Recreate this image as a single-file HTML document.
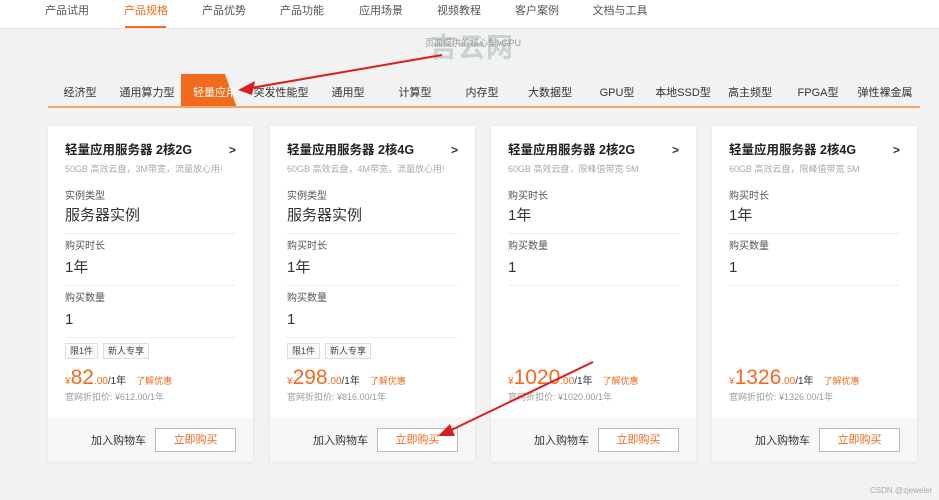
<!DOCTYPE html>
<html><head><meta charset="utf-8"><style>
*{margin:0;padding:0;box-sizing:border-box}
body{width:939px;height:500px;overflow:hidden;background:#f2f2f2;font-family:"Liberation Sans","Noto Sans CJK SC",sans-serif;position:relative;color:#333}
.top{position:absolute;left:0;top:0;width:939px;height:29px;background:#fff;border-bottom:1px solid #e6e6e6}
.nav{position:absolute;top:2px;font-size:11px;color:#555;transform:translateX(-50%);white-space:nowrap}
.tab{position:absolute;top:84px;font-size:11px;color:#333;transform:translateX(-50%);white-space:nowrap}
.card{position:absolute;top:126px;width:205px;height:336px;background:#fff;box-shadow:0 0 3px rgba(0,0,0,.08)}
.card>div{position:absolute;left:17px;white-space:nowrap}
.t{top:16px;font-size:12.5px;font-weight:bold;line-height:16px;color:#222}
.ar{position:absolute;right:17px;top:16px;font-size:12px;font-weight:bold;line-height:16px}
.s{top:37px;font-size:9px;color:#aaa;line-height:12px}
.l{font-size:10px;color:#555;line-height:14px}
.v{font-size:15px;color:#333;line-height:20px}
.d{height:1px;width:171px;background:#eee}
.tg{top:217px;height:16px;font-size:9px;line-height:14px}
.tg span{display:inline-block;border:1px solid #ddd;background:#fafafa;padding:0 4px;margin-right:5px;color:#444}
.p{top:240px;color:#f26b1d;font-size:10px;line-height:24px}
.p b{font-weight:normal;font-size:21px}
.p i{font-style:normal;color:#333;font-size:10px}
.p em{font-style:normal;margin-left:10px;font-size:9px}
.o{top:265px;font-size:9px;color:#999;line-height:12px}
.card>.f{left:0;top:292px;width:205px;height:44px;background:#f7f7f7}
.f .c{position:absolute;left:43px;top:14px;font-size:11px;color:#333}
.f .b{position:absolute;left:107px;top:10px;width:81px;height:24px;border:1px solid #bbb;background:#fff;color:#f26b1d;font-size:11px;text-align:center;line-height:22px}
</style></head><body>
<div class="top"></div>
<div class="nav" style="left:67px">产品试用</div>
<div class="nav" style="left:146px;color:#f26b1d">产品规格</div>
<div style="position:absolute;left:125px;top:26px;width:41px;height:2px;background:#f26b1d"></div>
<div class="nav" style="left:224px">产品优势</div>
<div class="nav" style="left:302px">产品功能</div>
<div class="nav" style="left:381px">应用场景</div>
<div class="nav" style="left:459px">视频教程</div>
<div class="nav" style="left:537px">客户案例</div>
<div class="nav" style="left:620px">文档与工具</div>

<div style="position:absolute;left:430px;top:26px;font-size:27px;font-weight:bold;color:#c8d4cc;letter-spacing:1px">吉云网</div>
<div style="position:absolute;left:425px;top:36px;font-size:9px;color:#999">页面提供的核心型vGPU</div>

<svg style="position:absolute;left:181px;top:74px" width="56" height="34"><polygon points="0,0 44,0 56,34 0,34" fill="#f26b1d"/></svg>
<div style="position:absolute;left:48px;top:106px;width:872px;height:2px;background:#f2a66b"></div>
<div class="tab" style="left:80px">经济型</div>
<div class="tab" style="left:147px">通用算力型</div>
<div class="tab" style="left:215px;color:#fff">轻量应用</div>
<div class="tab" style="left:281px">突发性能型</div>
<div class="tab" style="left:348px">通用型</div>
<div class="tab" style="left:415px">计算型</div>
<div class="tab" style="left:482px">内存型</div>
<div class="tab" style="left:550px">大数据型</div>
<div class="tab" style="left:617px">GPU型</div>
<div class="tab" style="left:683px">本地SSD型</div>
<div class="tab" style="left:750px">高主频型</div>
<div class="tab" style="left:818px">FPGA型</div>
<div class="tab" style="left:885px">弹性裸金属</div>

<div class="card" style="left:48px">
<div class="t">轻量应用服务器 2核2G</div><span class="ar">&gt;</span>
<div class="s">50GB 高效云盘，3M带宽，流量放心用!</div>
<div class="l" style="top:64px">实例类型</div><div class="v" style="top:80px">服务器实例</div><div class="d" style="top:107px"></div>
<div class="l" style="top:114px">购买时长</div><div class="v" style="top:132px">1年</div><div class="d" style="top:159px"></div>
<div class="l" style="top:166px">购买数量</div><div class="v" style="top:184px">1</div><div class="d" style="top:211px"></div>
<div class="tg"><span>限1件</span><span>新人专享</span></div>
<div class="p">¥<b>82</b>.00<i>/1年</i><em>了解优惠</em></div>
<div class="o">官网折扣价: ¥612.00/1年</div>
<div class="f"><span class="c">加入购物车</span><span class="b">立即购买</span></div>
</div>

<div class="card" style="left:270px">
<div class="t">轻量应用服务器 2核4G</div><span class="ar">&gt;</span>
<div class="s">60GB 高效云盘，4M带宽，流量放心用!</div>
<div class="l" style="top:64px">实例类型</div><div class="v" style="top:80px">服务器实例</div><div class="d" style="top:107px"></div>
<div class="l" style="top:114px">购买时长</div><div class="v" style="top:132px">1年</div><div class="d" style="top:159px"></div>
<div class="l" style="top:166px">购买数量</div><div class="v" style="top:184px">1</div><div class="d" style="top:211px"></div>
<div class="tg"><span>限1件</span><span>新人专享</span></div>
<div class="p">¥<b>298</b>.00<i>/1年</i><em>了解优惠</em></div>
<div class="o">官网折扣价: ¥816.00/1年</div>
<div class="f"><span class="c">加入购物车</span><span class="b">立即购买</span></div>
</div>

<div class="card" style="left:491px">
<div class="t">轻量应用服务器 2核2G</div><span class="ar">&gt;</span>
<div class="s">60GB 高效云盘，限峰值带宽 5M</div>
<div class="l" style="top:64px">购买时长</div><div class="v" style="top:80px">1年</div><div class="d" style="top:107px"></div>
<div class="l" style="top:114px">购买数量</div><div class="v" style="top:132px">1</div><div class="d" style="top:159px"></div>
<div class="p">¥<b>1020</b>.00<i>/1年</i><em>了解优惠</em></div>
<div class="o">官网折扣价: ¥1020.00/1年</div>
<div class="f"><span class="c">加入购物车</span><span class="b">立即购买</span></div>
</div>

<div class="card" style="left:712px">
<div class="t">轻量应用服务器 2核4G</div><span class="ar">&gt;</span>
<div class="s">60GB 高效云盘，限峰值带宽 5M</div>
<div class="l" style="top:64px">购买时长</div><div class="v" style="top:80px">1年</div><div class="d" style="top:107px"></div>
<div class="l" style="top:114px">购买数量</div><div class="v" style="top:132px">1</div><div class="d" style="top:159px"></div>
<div class="p">¥<b>1326</b>.00<i>/1年</i><em>了解优惠</em></div>
<div class="o">官网折扣价: ¥1326.00/1年</div>
<div class="f"><span class="c">加入购物车</span><span class="b">立即购买</span></div>
</div>

<svg style="position:absolute;left:0;top:0" width="939" height="500">
<line x1="442" y1="55" x2="245" y2="89" stroke="#d81e1e" stroke-width="2"/>
<polygon points="238,90 255,81 252,95" fill="#d81e1e"/>
<line x1="593" y1="362" x2="445" y2="433" stroke="#d81e1e" stroke-width="2"/>
<polygon points="438,436 450,424 455,436" fill="#d81e1e"/>
</svg>
<div style="position:absolute;left:870px;top:486px;font-size:8px;color:#aaa">CSDN @zjeweler</div>
</body></html>
